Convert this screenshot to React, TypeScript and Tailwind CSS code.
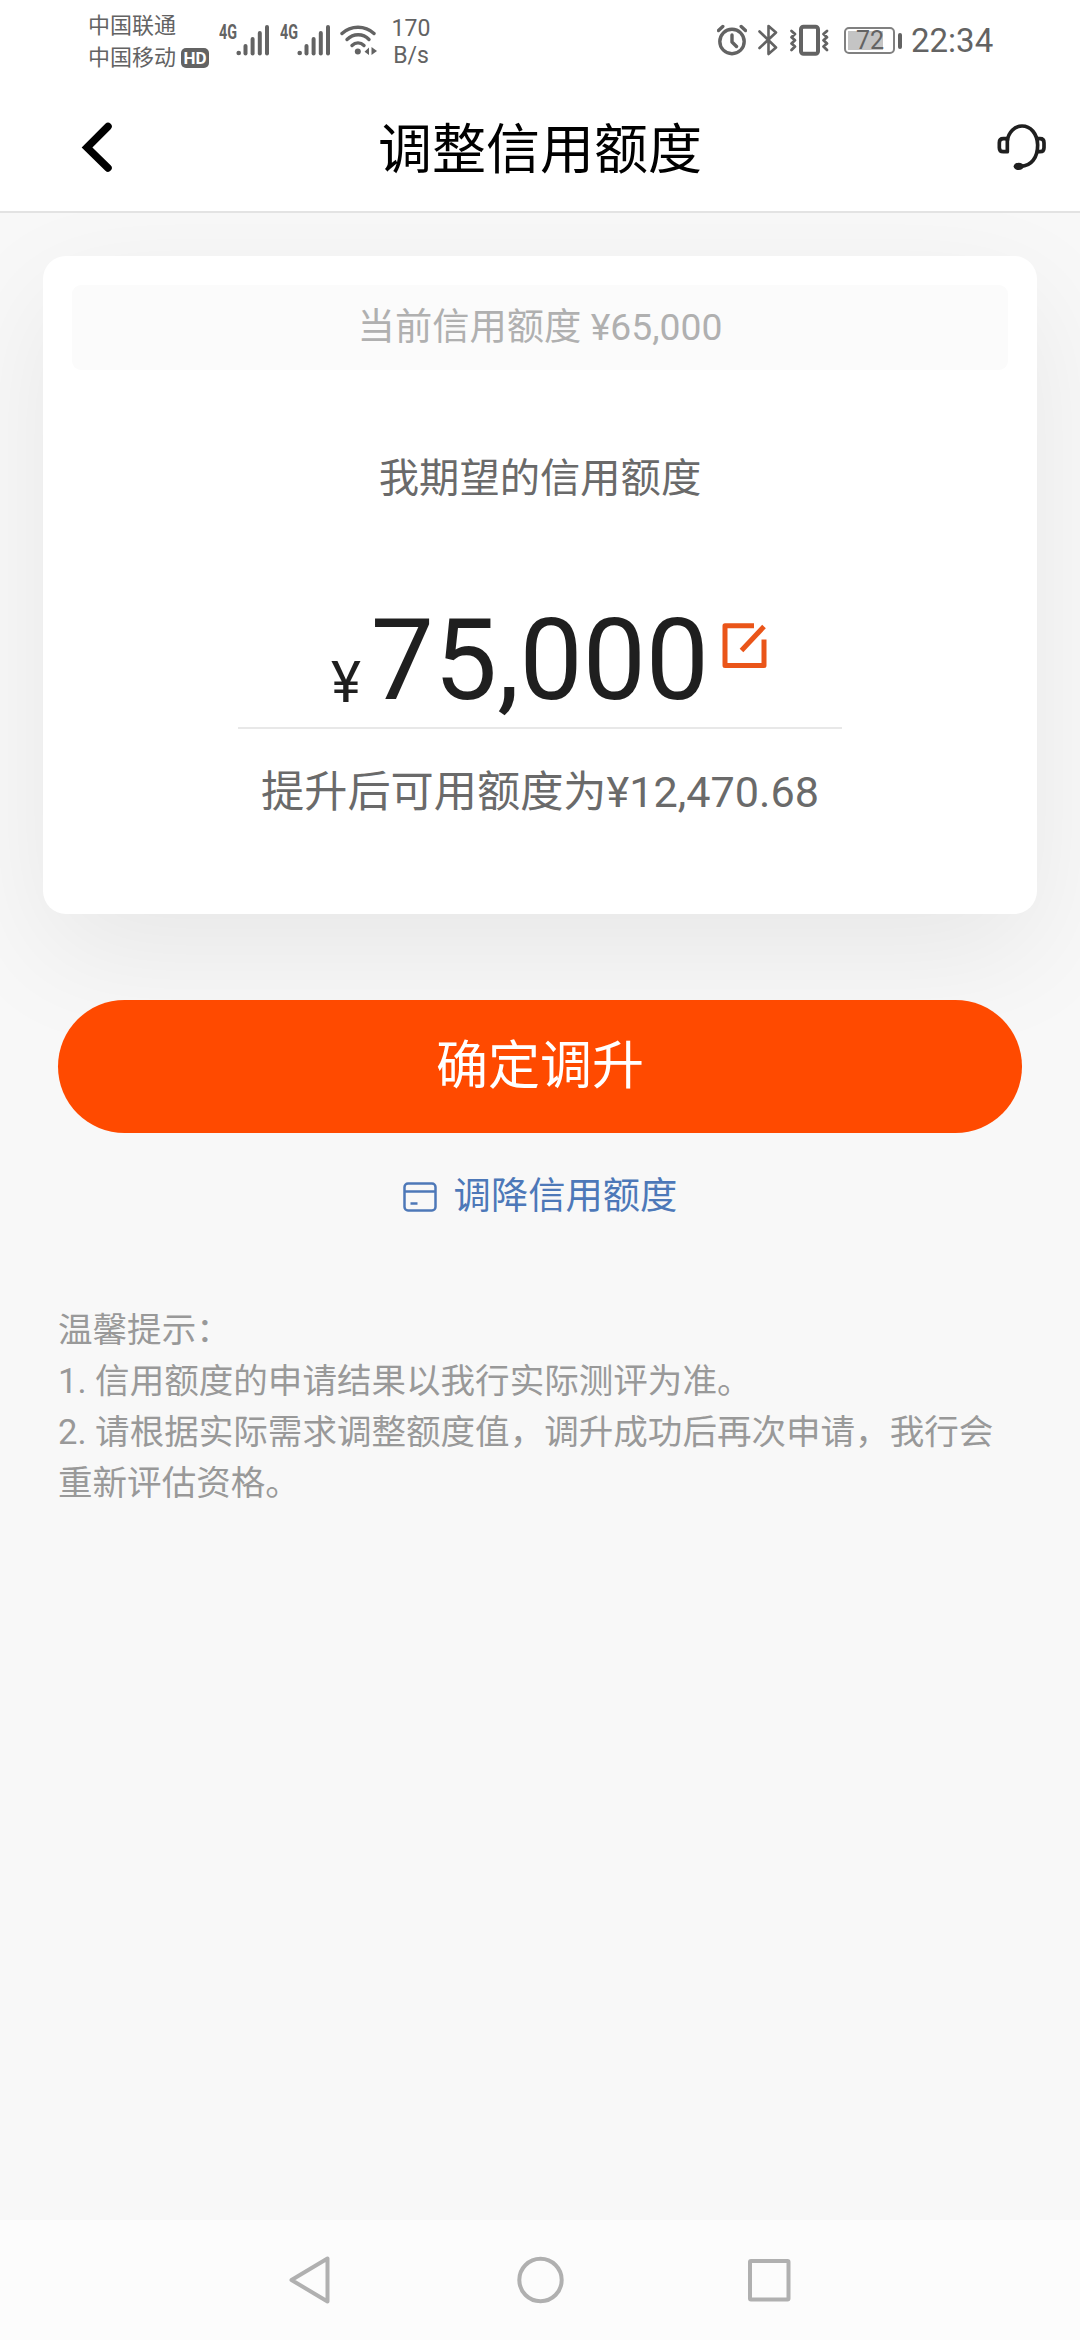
const CURRENT_LIMIT = "65,000";
const EXPECTED_LIMIT = "75,000";
const AVAILABLE_LIMIT = "12,470.68";

const TIPS = [
  "1. 信用额度的申请结果以我行实际测评为准。",
  "2. 请根据实际需求调整额度值，调升成功后再次申请，我行会重新评估资格。",
];

const SignalIcon = () => (
  <svg className="-mt-3 h-11 w-[52px]" viewBox="0 -12 52 44" fill="#636363">
    <text x="0" y="15" fontSize="20" fontWeight="700" textLength="18" lengthAdjust="spacingAndGlyphs" fontFamily="Roboto, sans-serif">
      4G
    </text>
    <circle cx="19.7" cy="29" r="2.3" />
    <rect x="24.5" y="20" width="4" height="11.5" rx="2" />
    <rect x="31.6" y="13" width="4" height="18.5" rx="2" />
    <rect x="38.8" y="7" width="4" height="24.5" rx="2" />
    <rect x="46" y="1" width="4" height="30.5" rx="2" />
  </svg>
);

const WifiIcon = () => (
  <svg className="h-8 w-[37px]" viewBox="0 0 37 32" fill="none" stroke="#636363" strokeWidth="3.4" strokeLinecap="round">
    <path d="M2 9.5C11 1.2 25 1.2 34 9.5" />
    <path d="M7 15.5C13.5 9.2 23 9.2 29 15.5" />
    <path d="M12 21.5C15.5 18 20.5 18 24 21.5" />
    <circle cx="17.8" cy="27.5" r="3" fill="#636363" stroke="none" />
    <path d="M29 23.5v7.5l-4.5-3.2zM31.5 23l5.5 4-5.5 4z" fill="#636363" stroke="none" />
  </svg>
);

const AlarmIcon = () => (
  <svg className="h-8 w-[30px]" viewBox="0 0 30 32" fill="none" stroke="#636363" strokeWidth="3.4" strokeLinecap="round" strokeLinejoin="round">
    <circle cx="15" cy="17.5" r="12.2" />
    <path d="M15 11v7l4.5 4.5M1.5 6.5l4.3-4M28.5 6.5l-4.3-4" />
  </svg>
);

const BluetoothIcon = () => (
  <svg className="h-8 w-5" viewBox="0 0 20 32" fill="none" stroke="#636363" strokeWidth="2.6" strokeLinejoin="round" strokeLinecap="round">
    <path d="M1.5 7.5L18 23.5L10.5 30V2L18 8.5L1.5 24" />
  </svg>
);

const VibrateIcon = () => (
  <svg className="h-8 w-10" viewBox="0 0 40 32" fill="none" stroke="#636363" strokeLinejoin="round" strokeLinecap="round">
    <rect x="12" y="2.8" width="17" height="27" rx="2.5" strokeWidth="4" />
    <path d="M2.5 7l3.5 3-3.5 3.3 3.5 3-3.5 3.2 3.5 3-3.5 3.5M38 7l-3.5 3 3.5 3.3-3.5 3 3.5 3.2-3.5 3 3.5 3.5" strokeWidth="2.8" />
  </svg>
);

const HeadsetIcon = () => (
  <svg className="h-[53px] w-[55px]" viewBox="100 60 165 159" fill="none" stroke="#1f1f1f" strokeWidth="11" strokeLinejoin="round">
    <path d="M140 155V116H128Q116 116 116 128V143Q116 155 128 155Z" />
    <path d="M229 116H238Q250 116 250 128V143Q250 155 238 155H230" />
    <path d="M140 122C143 97 162 78 184 78C210 78 230 101 231 135C231 172 213 198 180 199" />
    <ellipse cx="174" cy="199" rx="15" ry="11" fill="#1f1f1f" stroke="none" />
  </svg>
);

const EditIcon = () => (
  <svg className="h-[46px] w-[46px]" viewBox="0 0 46 46" fill="none" stroke="#ea5519" strokeWidth="5">
    <path d="M32 2.8H3V42.5H42V16.5" strokeLinejoin="round" />
    <path d="M19.5 27.5L42 3.5" strokeLinecap="butt" />
  </svg>
);

const CardIcon = () => (
  <svg className="h-[30px] w-[34px]" viewBox="0 0 34 30" fill="none" stroke="#4d78b8" strokeWidth="2.5">
    <rect x="1.5" y="1.5" width="31" height="27" rx="3.5" />
    <path d="M1.5 9.5h31M7.5 21.5h7" />
  </svg>
);

const StatusBar = () => (
  <div className="flex h-20 items-start bg-white pt-6 pr-[85px] pl-[88px] text-[#636363]">
    <div className="-mt-[14px] flex w-[131px] flex-col text-[22px] leading-8 whitespace-nowrap">
      <span>中国联通</span>
      <div className="flex items-center gap-[5px]">
        <span>中国移动</span>
        <span className="flex h-5 w-7 items-center justify-center rounded-[5px] bg-[#636363] text-[17px] leading-none font-bold text-white">
          HD
        </span>
      </div>
    </div>
    <SignalIcon />
    <div className="ml-[9px]">
      <SignalIcon />
    </div>
    <div className="ml-2">
      <WifiIcon />
    </div>
    <div className="-mt-[9px] ml-[14px] flex w-10 flex-col items-center text-[23px] leading-[27px]">
      <span>170</span>
      <span>B/s</span>
    </div>
    <div className="ml-auto flex">
      <AlarmIcon />
      <div className="ml-[11px]">
        <BluetoothIcon />
      </div>
      <div className="ml-[11px]">
        <VibrateIcon />
      </div>
      <div className="mt-[3px] ml-[15px] flex h-[27px] items-center gap-[3px]">
        <div className="flex h-[27px] w-[51px] items-center rounded-[5px] border-2 border-[#808080] p-[2px]">
          <div className="flex h-full w-[35px] items-center bg-[#c4c4c4] pl-[8px] text-[25px] leading-none">
            72
          </div>
        </div>
        <div className="h-4 w-1 rounded-full bg-[#636363]" />
      </div>
      <span className="mt-px ml-[9px] w-[84px] text-[33px] leading-8">22:34</span>
    </div>
  </div>
);

const Header = () => (
  <header className="relative z-10 flex h-[133px] items-center justify-between border-b-2 border-[#e3e3e3] bg-white pt-[2px] pr-[31px] pl-[80px]">
    <button className="w-[55px]">
      <svg className="h-[50px] w-8" viewBox="0 0 32 50" fill="none" stroke="#000" strokeWidth="7.5" strokeLinecap="round" strokeLinejoin="miter">
        <path d="M28 4.5L7 25.5L28 46" />
      </svg>
    </button>
    <h1 className="mr-[49px] pt-[9px] text-[54px] leading-none text-black">调整信用额度</h1>
    <button>
      <HeadsetIcon />
    </button>
  </header>
);

const LimitCard = () => (
  <section className="mx-[43px] mt-[43px] flex h-[658px] flex-col items-center rounded-[23px] bg-white pt-[29px] shadow-[0_40px_120px_rgba(0,0,0,0.07)]">
    <div className="flex h-[85px] w-[936px] items-center justify-center rounded-[9px] bg-[#fbfbfb] text-[37.3px] text-[#b0b0b0]">
      当前信用额度 ¥{CURRENT_LIMIT}
    </div>
    <p className="mt-[79px] text-[40.3px] leading-[60px] text-[#6a6a6a]">我期望的信用额度</p>
    <div className="mt-[81px] flex h-[139px] w-[604px] items-start justify-center border-b-2 border-[#e8e8e8] pl-[19px] text-[#1f1f1f]">
      <span className="mt-[59px] text-[57px] leading-[68px]">¥</span>
      <span className="ml-[10px] text-[112.5px] leading-[142px]">{EXPECTED_LIMIT}</span>
      <button className="mt-[33px] ml-[13px]">
        <EditIcon />
      </button>
    </div>
    <p className="mt-[32px] text-[43.2px] leading-[64px] text-[#6a6a6a]">提升后可用额度为¥{AVAILABLE_LIMIT}</p>
  </section>
);

const NavBar = () => (
  <nav className="flex h-[120px] items-center justify-center bg-[#fcfcfc]">
    <svg className="h-12 w-[502px]" viewBox="0 0 502 48" fill="none" stroke="#b0b0b0" strokeWidth="4" strokeLinejoin="round">
      <path d="M38.5 2.5V45.5L2.5 24Z" />
      <circle cx="251.5" cy="24" r="21.2" />
      <rect x="461" y="5" width="38.5" height="38.5" rx="1" />
    </svg>
  </nav>
);

const App = () => {
  return (
    <div className="flex h-[2340px] w-[1080px] flex-col overflow-hidden bg-[#f8f8f8] font-[Roboto,'Noto_Sans_CJK_SC',sans-serif]">
      <StatusBar />
      <Header />
      <main className="flex flex-1 flex-col">
        <LimitCard />
        <button className="z-10 mx-[58px] mt-[86px] h-[133px] rounded-full bg-[#ff4a00] text-[52px] leading-none text-white">
          确定调升
        </button>
        <button className="mt-[36px] flex h-[56px] items-center justify-center gap-[17px] text-[37.3px] text-[#4d78b8]">
          <CardIcon />
          调降信用额度
        </button>
        <div className="mt-[80px] px-[58px] text-[34.56px] leading-[51px] text-[#999]">
          <p>温馨提示：</p>
          {TIPS.map((tip) => (
            <p key={tip}>{tip}</p>
          ))}
        </div>
      </main>
      <NavBar />
    </div>
  );
};

export default App;
